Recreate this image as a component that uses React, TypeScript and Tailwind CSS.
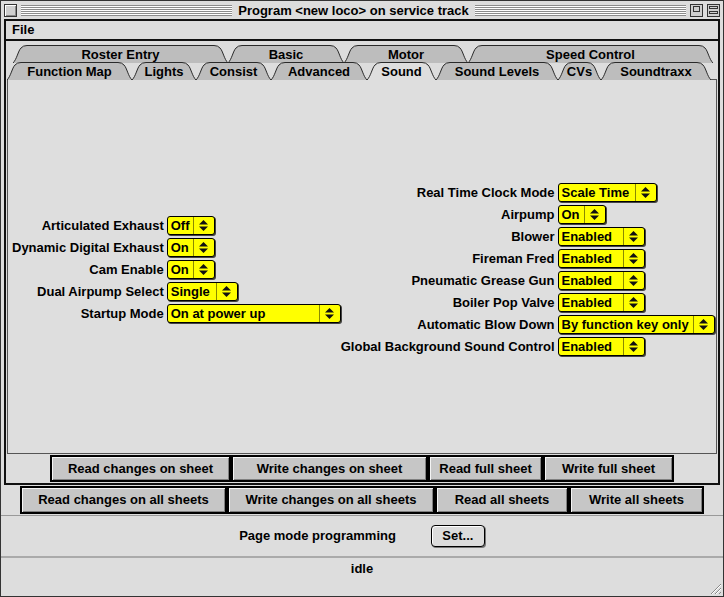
import React from "react";

const rowOneTabs = [
  { label: "Roster Entry", w: 215 },
  { label: "Basic", w: 116 },
  { label: "Motor", w: 124 },
  { label: "Speed Control", w: 245 },
];

const rowTwoTabs = [
  { label: "Function Map", w: 125 },
  { label: "Lights", w: 64 },
  { label: "Consist", w: 75 },
  { label: "Advanced", w: 96 },
  { label: "Sound", w: 69, active: true },
  { label: "Sound Levels", w: 122 },
  { label: "CVs", w: 43 },
  { label: "Soundtraxx", w: 110 },
];

const leftFields = [
  { label: "Articulated Exhaust", value: "Off", w: 48 },
  { label: "Dynamic Digital Exhaust", value: "On", w: 48 },
  { label: "Cam Enable", value: "On", w: 48 },
  { label: "Dual Airpump Select", value: "Single", w: 71 },
  { label: "Startup Mode", value: "On at power up", w: 174 },
];

const rightFields = [
  { label: "Real Time Clock Mode", value: "Scale Time", w: 99 },
  { label: "Airpump", value: "On", w: 48 },
  { label: "Blower", value: "Enabled", w: 87 },
  { label: "Fireman Fred", value: "Enabled", w: 87 },
  { label: "Pneumatic Grease Gun", value: "Enabled", w: 87 },
  { label: "Boiler Pop Valve", value: "Enabled", w: 87 },
  { label: "Automatic Blow Down", value: "By function key only", w: 157 },
  { label: "Global Background Sound Control", value: "Enabled", w: 87 },
];

function Tab({ label, w, active }: { label: string; w: number; active?: boolean }) {
  const h = 18;
  return (
    <div className="relative flex h-[18px] items-center justify-center" style={{ width: w }}>
      <svg className="absolute inset-0" width={w} height={h}>
        <path
          d={`M0,${h} C4,${h - 4} 5,6 8,3 Q10,0.5 14,0.5 L${w - 14},0.5 Q${w - 10},0.5 ${w - 8},3 C${w - 5},6 ${w - 4},${h - 4} ${w},${h}`}
          fill={active ? "#dedede" : "#bdbdbd"}
          stroke="#2a2a2a"
          strokeWidth="1"
        />
      </svg>
      <span className="relative whitespace-nowrap leading-none">{label}</span>
    </div>
  );
}

function Arrows() {
  return (
    <svg width="9" height="11" viewBox="0 0 9 11">
      <path d="M4.5,0 L9,4.5 L0,4.5 Z" fill="#111" />
      <path d="M0,6.5 L9,6.5 L4.5,11 Z" fill="#111" />
    </svg>
  );
}

function Select({ value, w }: { value: string; w: number }) {
  return (
    <div
      className="flex h-[19px] items-stretch rounded-[3px] border border-black bg-[#ffff00] shadow-[1px_1px_0_#444]"
      style={{ width: w }}
    >
      <span className="flex flex-1 items-center whitespace-nowrap pl-[3px] leading-none">{value}</span>
      <span className="flex w-[21px] items-center justify-center border-l border-[#8a8a00]">
        <Arrows />
      </span>
    </div>
  );
}

function Field({ label, value, w }: { label: string; value: string; w: number }) {
  return (
    <>
      <span className="flex h-[22px] items-center justify-end whitespace-nowrap">{label}</span>
      <div className="flex h-[22px] items-center">
        <Select value={value} w={w} />
      </div>
    </>
  );
}

function Btn({ label, w, h }: { label: string; w: number; h: number }) {
  return (
    <button
      className="flex items-center justify-center whitespace-nowrap border-2 border-black bg-[#c6c6c6] shadow-[inset_1px_1px_0_#f4f4f4,inset_-1px_-1px_0_#808080]"
      style={{ width: w, height: h }}
    >
      {label}
    </button>
  );
}

function Stripes() {
  return (
    <div className="h-[11px] flex-1 bg-[repeating-linear-gradient(to_bottom,#8c8c8c_0px,#8c8c8c_1px,#ffffff_1px,#ffffff_2px)]" />
  );
}

function App() {
  return (
    <div className="flex h-[597px] w-[724px] flex-col overflow-hidden border border-[#333] bg-[#dddddd] font-['Liberation_Sans',Arial,sans-serif] text-[13px] font-bold text-black">
      {/* title bar */}
      <div className="flex h-[18px] items-center gap-[4px] px-[3px]">
        <div className="h-[13px] w-[13px] border border-[#333] bg-[#cfcfcf] shadow-[inset_1px_1px_0_#fff,inset_-1px_-1px_0_#888]" />
        <Stripes />
        <span className="whitespace-nowrap px-[2px] leading-none">Program &lt;new loco&gt; on service track</span>
        <Stripes />
        <div className="flex h-[13px] w-[13px] items-start justify-center border border-[#333] bg-[#cfcfcf]">
          <div className="mt-[1px] h-[6px] w-[7px] border border-[#333]" />
        </div>
        <div className="flex h-[13px] w-[13px] flex-col items-center justify-center gap-[2px] border border-[#333] bg-[#cfcfcf]">
          <div className="h-[3px] w-[9px] border border-[#333]" />
          <div className="h-[3px] w-[9px] border border-[#333]" />
        </div>
      </div>

      <div className="mx-[3px] flex flex-col border-x-2 border-t-2 border-[#111]">
        {/* menu bar */}
        <div className="flex h-[20px] items-center border-b-2 border-[#111] pl-[6px]">File</div>

        {/* tabs */}
        <div className="mt-[4px] flex pl-[7px]">
          {rowOneTabs.map((t) => (
            <Tab key={t.label} {...t} />
          ))}
        </div>
        <div className="-mt-[1px] flex pl-[1px]">
          {rowTwoTabs.map((t) => (
            <Tab key={t.label} {...t} />
          ))}
        </div>

        {/* sheet */}
        <div className="mx-[1px] -mt-[1px] flex h-[375px] items-center border border-[#555] bg-[#dedede] pb-[2px] pl-[4px] pr-[2px] pt-[8px]">
          <div className="grid grid-cols-[auto_auto] gap-x-[3px]">
            {leftFields.map((f) => (
              <Field key={f.label} {...f} />
            ))}
          </div>
          <div className="ml-auto grid grid-cols-[auto_auto] gap-x-[3px]">
            {rightFields.map((f) => (
              <Field key={f.label} {...f} />
            ))}
          </div>
        </div>

        <div className="flex h-[31px] items-center justify-center border-b-2 border-[#111]">
          <Btn label="Read changes on sheet" w={181} h={27} />
          <Btn label="Write changes on sheet" w={197} h={27} />
          <Btn label="Read full sheet" w={115} h={27} />
          <Btn label="Write full sheet" w={131} h={27} />
        </div>
      </div>

      <div className="flex h-[31px] items-center justify-center border-b border-[#999]">
        <Btn label="Read changes on all sheets" w={207} h={28} />
        <Btn label="Write changes on all sheets" w={208} h={28} />
        <Btn label="Read all sheets" w={134} h={28} />
        <Btn label="Write all sheets" w={135} h={28} />
      </div>

      <div className="flex h-[42px] items-center justify-center gap-[35px] border-b-2 border-[#aaa]">
        <span>Page mode programming</span>
        <button className="h-[22px] w-[54px] rounded-[4px] border border-black bg-[#dcdcdc] shadow-[inset_1px_1px_0_#fff,1px_1px_0_#777]">
          Set...
        </button>
      </div>

      <div className="flex h-[20px] items-center justify-center pt-[2px]">idle</div>

      <div className="relative flex-1">
        <svg className="absolute bottom-[1px] right-[1px]" width="14" height="14" viewBox="0 0 14 14">
          <path d="M13,3 L3,13 M13,7 L7,13 M13,11 L11,13" stroke="#888" strokeWidth="1" />
          <path d="M13,4 L4,13 M13,8 L8,13" stroke="#fff" strokeWidth="1" />
        </svg>
      </div>
    </div>
  );
}

export default App;
